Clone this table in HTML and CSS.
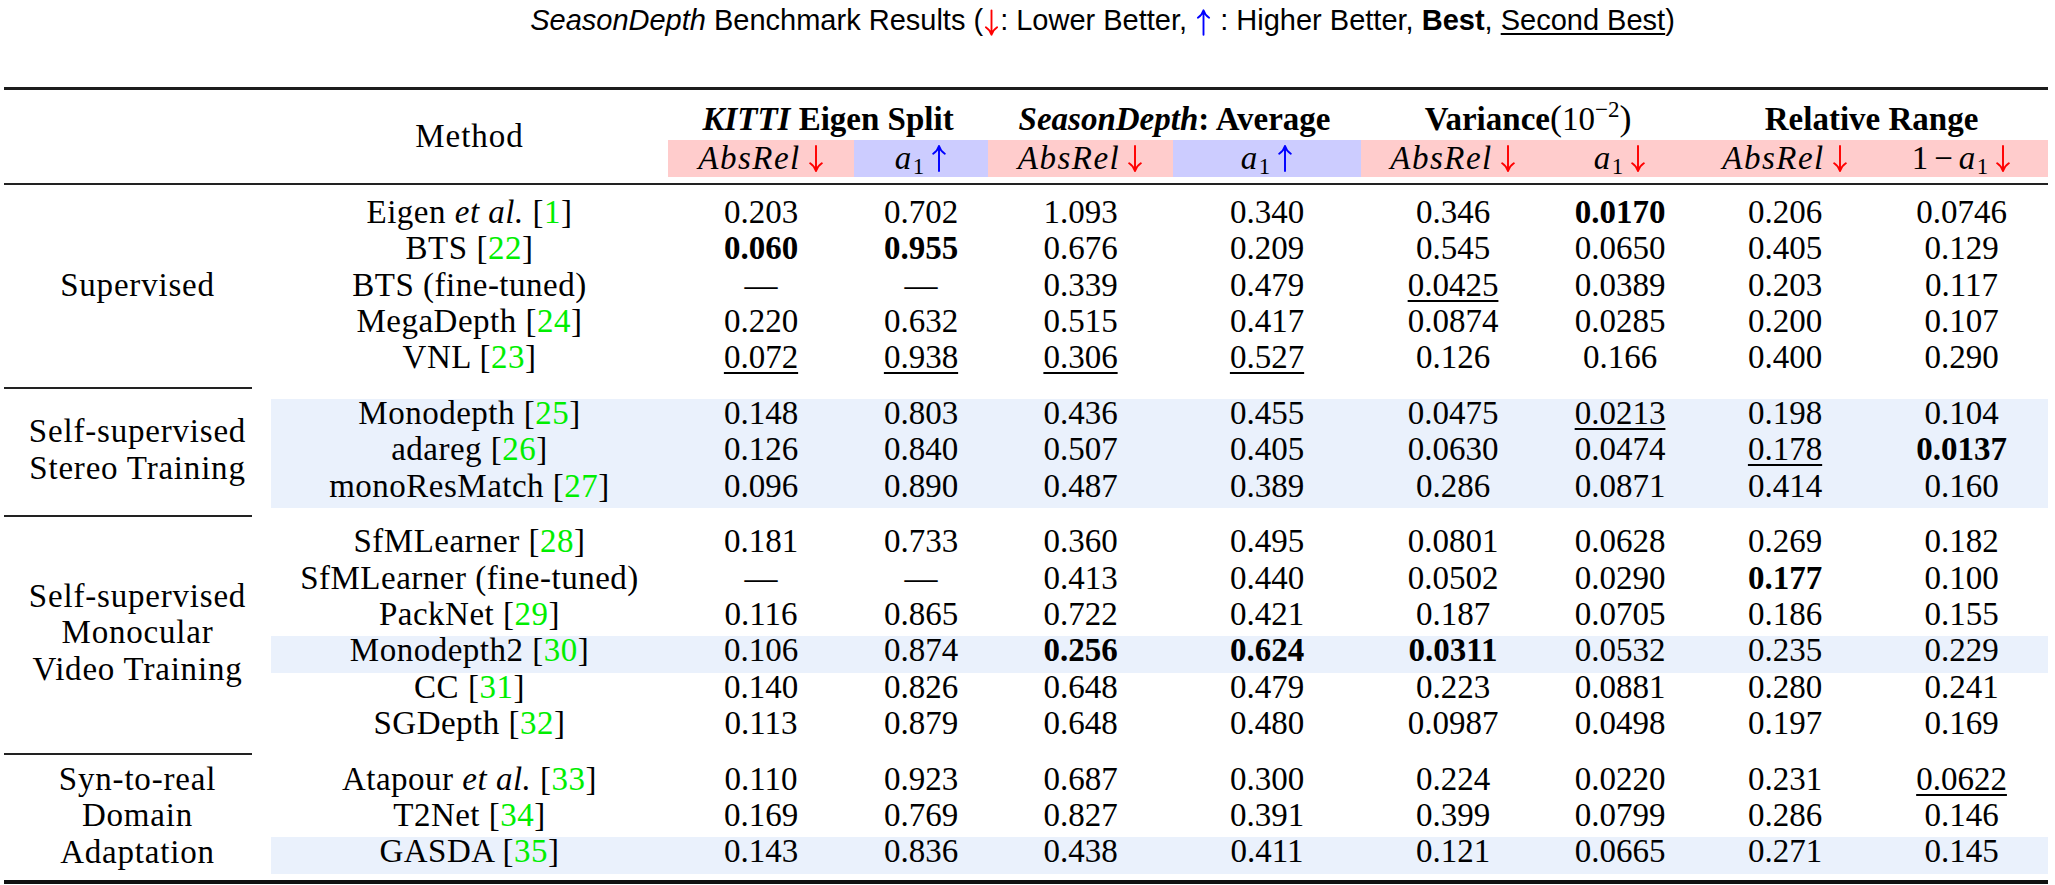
FILE: index.html
```html
<!DOCTYPE html>
<html lang="en">
<head>
<meta charset="utf-8">
<title>SeasonDepth Benchmark Results</title>
<link rel="stylesheet" href="styles.css">
</head>
<body>
<p class="title"><i>SeasonDepth</i> Benchmark Results (<svg class="tarr red" viewBox="0 0 16 28"><path d="M8 1V26M2 19C5 21 7 23.5 8 27C9 23.5 11 21 14 19"/></svg>: Lower Better, <svg class="tarr blue" viewBox="0 0 16 28"><path d="M8 27V2M2 9C5 7 7 4.5 8 1C9 4.5 11 7 14 9"/></svg> : Higher Better, <b>Best</b>, <u class="tu">Second Best</u>)</p>

<table class="bench">
  <colgroup>
    <col class="c-grp"><col class="c-meth"><col class="c-1"><col class="c-2"><col class="c-3"><col class="c-4"><col class="c-5"><col class="c-6"><col class="c-7"><col class="c-8">
  </colgroup>
  <thead>
    <tr class="h1">
      <th rowspan="2" class="blank"></th>
      <th rowspan="2" class="meth-h">Method</th>
      <th colspan="2"><i>KITTI</i> Eigen Split</th>
      <th colspan="2"><i>SeasonDepth</i>: Average</th>
      <th colspan="2">Variance<span class="rm"><span class="paren">(</span>10<span class="sup">−2</span><span class="paren">)</span></span></th>
      <th colspan="2">Relative Range</th>
    </tr>
    <tr class="h2">
      <th class="pk"><span class="m">AbsRel</span><svg class="arr red" viewBox="0 0 16 28"><path d="M8 1V26M2 19C5 21 7 23.5 8 27C9 23.5 11 21 14 19"/></svg></th>
      <th class="bl"><span class="m">a</span><span class="sub">1</span><svg class="arr blue" viewBox="0 0 16 28"><path d="M8 27V2M2 9C5 7 7 4.5 8 1C9 4.5 11 7 14 9"/></svg></th>
      <th class="pk"><span class="m">AbsRel</span><svg class="arr red" viewBox="0 0 16 28"><path d="M8 1V26M2 19C5 21 7 23.5 8 27C9 23.5 11 21 14 19"/></svg></th>
      <th class="bl"><span class="m">a</span><span class="sub">1</span><svg class="arr blue" viewBox="0 0 16 28"><path d="M8 27V2M2 9C5 7 7 4.5 8 1C9 4.5 11 7 14 9"/></svg></th>
      <th class="pk"><span class="m">AbsRel</span><svg class="arr red" viewBox="0 0 16 28"><path d="M8 1V26M2 19C5 21 7 23.5 8 27C9 23.5 11 21 14 19"/></svg></th>
      <th class="pk"><span class="m">a</span><span class="sub">1</span><svg class="arr red" viewBox="0 0 16 28"><path d="M8 1V26M2 19C5 21 7 23.5 8 27C9 23.5 11 21 14 19"/></svg></th>
      <th class="pk"><span class="m">AbsRel</span><svg class="arr red" viewBox="0 0 16 28"><path d="M8 1V26M2 19C5 21 7 23.5 8 27C9 23.5 11 21 14 19"/></svg></th>
      <th class="pk"><span class="one">1</span><span class="minus">−</span><span class="m">a</span><span class="sub">1</span><svg class="arr red" viewBox="0 0 16 28"><path d="M8 1V26M2 19C5 21 7 23.5 8 27C9 23.5 11 21 14 19"/></svg></th>
    </tr>
  </thead>
  <tbody>
    <tr class="midgap"><td colspan="10"><div class="midrule"></div></td></tr>

    <tr class="row">
      <td rowspan="5" class="grp"><div class="grp-text">Supervised</div></td>
      <td class="c meth">Eigen <i>et al.</i> [<span class="ref">1</span>]</td>
      <td class="c">0.203</td><td class="c">0.702</td><td class="c">1.093</td><td class="c">0.340</td><td class="c">0.346</td><td class="c"><b>0.0170</b></td><td class="c">0.206</td><td class="c">0.0746</td>
    </tr>
    <tr class="row">
      <td class="c meth">BTS [<span class="ref">22</span>]</td>
      <td class="c"><b>0.060</b></td><td class="c"><b>0.955</b></td><td class="c">0.676</td><td class="c">0.209</td><td class="c">0.545</td><td class="c">0.0650</td><td class="c">0.405</td><td class="c">0.129</td>
    </tr>
    <tr class="row">
      <td class="c meth">BTS (fine-tuned)</td>
      <td class="c">—</td><td class="c">—</td><td class="c">0.339</td><td class="c">0.479</td><td class="c"><span class="u">0.0425</span></td><td class="c">0.0389</td><td class="c">0.203</td><td class="c">0.117</td>
    </tr>
    <tr class="row">
      <td class="c meth">MegaDepth [<span class="ref">24</span>]</td>
      <td class="c">0.220</td><td class="c">0.632</td><td class="c">0.515</td><td class="c">0.417</td><td class="c">0.0874</td><td class="c">0.0285</td><td class="c">0.200</td><td class="c">0.107</td>
    </tr>
    <tr class="row">
      <td class="c meth">VNL [<span class="ref">23</span>]</td>
      <td class="c"><span class="u">0.072</span></td><td class="c"><span class="u">0.938</span></td><td class="c"><span class="u">0.306</span></td><td class="c"><span class="u">0.527</span></td><td class="c">0.126</td><td class="c">0.166</td><td class="c">0.400</td><td class="c">0.290</td>
    </tr>

    <tr class="sep"><td><div class="cmid"></div></td><td colspan="9"></td></tr>

    <tr class="row hl">
      <td rowspan="3" class="grp"><div class="grp-text">Self-supervised<br>Stereo Training</div></td>
      <td class="c meth">Monodepth [<span class="ref">25</span>]</td>
      <td class="c">0.148</td><td class="c">0.803</td><td class="c">0.436</td><td class="c">0.455</td><td class="c">0.0475</td><td class="c"><span class="u">0.0213</span></td><td class="c">0.198</td><td class="c">0.104</td>
    </tr>
    <tr class="row hl">
      <td class="c meth">adareg [<span class="ref">26</span>]</td>
      <td class="c">0.126</td><td class="c">0.840</td><td class="c">0.507</td><td class="c">0.405</td><td class="c">0.0630</td><td class="c">0.0474</td><td class="c"><span class="u">0.178</span></td><td class="c"><b>0.0137</b></td>
    </tr>
    <tr class="row hl">
      <td class="c meth">monoResMatch [<span class="ref">27</span>]</td>
      <td class="c">0.096</td><td class="c">0.890</td><td class="c">0.487</td><td class="c">0.389</td><td class="c">0.286</td><td class="c">0.0871</td><td class="c">0.414</td><td class="c">0.160</td>
    </tr>

    <tr class="sep"><td><div class="cmid"></div></td><td colspan="9"></td></tr>

    <tr class="row">
      <td rowspan="6" class="grp"><div class="grp-text">Self-supervised<br>Monocular<br>Video Training</div></td>
      <td class="c meth">SfMLearner [<span class="ref">28</span>]</td>
      <td class="c">0.181</td><td class="c">0.733</td><td class="c">0.360</td><td class="c">0.495</td><td class="c">0.0801</td><td class="c">0.0628</td><td class="c">0.269</td><td class="c">0.182</td>
    </tr>
    <tr class="row">
      <td class="c meth">SfMLearner (fine-tuned)</td>
      <td class="c">—</td><td class="c">—</td><td class="c">0.413</td><td class="c">0.440</td><td class="c">0.0502</td><td class="c">0.0290</td><td class="c"><b>0.177</b></td><td class="c">0.100</td>
    </tr>
    <tr class="row">
      <td class="c meth">PackNet [<span class="ref">29</span>]</td>
      <td class="c">0.116</td><td class="c">0.865</td><td class="c">0.722</td><td class="c">0.421</td><td class="c">0.187</td><td class="c">0.0705</td><td class="c">0.186</td><td class="c">0.155</td>
    </tr>
    <tr class="row hl">
      <td class="c meth">Monodepth2 [<span class="ref">30</span>]</td>
      <td class="c">0.106</td><td class="c">0.874</td><td class="c"><b>0.256</b></td><td class="c"><b>0.624</b></td><td class="c"><b>0.0311</b></td><td class="c">0.0532</td><td class="c">0.235</td><td class="c">0.229</td>
    </tr>
    <tr class="row">
      <td class="c meth">CC [<span class="ref">31</span>]</td>
      <td class="c">0.140</td><td class="c">0.826</td><td class="c">0.648</td><td class="c">0.479</td><td class="c">0.223</td><td class="c">0.0881</td><td class="c">0.280</td><td class="c">0.241</td>
    </tr>
    <tr class="row">
      <td class="c meth">SGDepth [<span class="ref">32</span>]</td>
      <td class="c">0.113</td><td class="c">0.879</td><td class="c">0.648</td><td class="c">0.480</td><td class="c">0.0987</td><td class="c">0.0498</td><td class="c">0.197</td><td class="c">0.169</td>
    </tr>

    <tr class="sep"><td><div class="cmid"></div></td><td colspan="9"></td></tr>

    <tr class="row">
      <td rowspan="3" class="grp"><div class="grp-text">Syn-to-real<br>Domain<br>Adaptation</div></td>
      <td class="c meth">Atapour <i>et al.</i> [<span class="ref">33</span>]</td>
      <td class="c">0.110</td><td class="c">0.923</td><td class="c">0.687</td><td class="c">0.300</td><td class="c">0.224</td><td class="c">0.0220</td><td class="c">0.231</td><td class="c"><span class="u">0.0622</span></td>
    </tr>
    <tr class="row">
      <td class="c meth">T2Net [<span class="ref">34</span>]</td>
      <td class="c">0.169</td><td class="c">0.769</td><td class="c">0.827</td><td class="c">0.391</td><td class="c">0.399</td><td class="c">0.0799</td><td class="c">0.286</td><td class="c">0.146</td>
    </tr>
    <tr class="row hl">
      <td class="c meth">GASDA [<span class="ref">35</span>]</td>
      <td class="c">0.143</td><td class="c">0.836</td><td class="c">0.438</td><td class="c">0.411</td><td class="c">0.121</td><td class="c">0.0665</td><td class="c">0.271</td><td class="c">0.145</td>
    </tr>

    <tr class="endgap"><td colspan="10"></td></tr>
  </tbody>
</table>
</body>
</html>
```

FILE: styles.css
```css
* { box-sizing: border-box; }

html, body {
  margin: 0;
  padding: 0;
  background: #ffffff;
}

body {
  width: 2055px;
  height: 885px;
  overflow: hidden;
  color: #000000;
}

/* ---------- title ---------- */
.title {
  margin: 0;
  height: 40px;
  line-height: 40px;
  padding-left: 150px;
  text-align: center;
  white-space: nowrap;
  font-family: "Liberation Sans", Arial, sans-serif;
  font-size: 29px;
}

.tarr {
  width: 15px;
  height: 27px;
  vertical-align: -6px;
  margin: 0 1px;
}

.tu {
  text-decoration-thickness: 1.5px;
  text-underline-offset: 3px;
}

.red { color: #ff0000; }
.blue { color: #0000ff; }

.tarr path,
.arr path {
  fill: none;
  stroke: currentColor;
  stroke-width: 2;
  stroke-linecap: round;
  stroke-linejoin: round;
}

/* ---------- table ---------- */
.bench {
  margin: 47px 0 0 4px;
  width: 2044px;
  table-layout: fixed;
  border-collapse: separate;
  border-spacing: 0;
  border-top: 3px solid #1c1c1c;
  border-bottom: 4px solid #111111;
  font-family: "Liberation Serif", "Times New Roman", serif;
  font-size: 33px;
}

.c-grp { width: 267px; }
.c-meth { width: 397px; }
.c-1 { width: 186px; }
.c-2 { width: 134px; }
.c-3 { width: 185px; }
.c-4 { width: 188px; }
.c-5 { width: 184px; }
.c-6 { width: 150px; }
.c-7 { width: 180px; }
.c-8 { width: 173px; }

.bench th,
.bench td {
  padding: 0;
  text-align: center;
  white-space: nowrap;
}

/* header row 1 */
.h1 th {
  height: 50px;
  line-height: 36px;
  padding-bottom: 3px;
  vertical-align: bottom;
  font-weight: bold;
}

.h1 .meth-h {
  font-weight: normal;
  vertical-align: middle;
  padding: 5px 0 0;
  letter-spacing: 1px;
}

.rm {
  font-weight: normal;
}

.paren {
  font-size: 36px;
}

.sup {
  font-size: 23px;
  vertical-align: 13px;
  line-height: 0;
}

/* header row 2 */
.h2 th {
  height: 37px;
  line-height: 37px;
  vertical-align: middle;
  font-weight: normal;
}

.pk { background: #ffcccc; }
.bl { background: #ccccff; }

.m {
  font-style: italic;
  letter-spacing: 1.5px;
}

.sub {
  font-size: 23px;
  vertical-align: -5px;
  line-height: 0;
}

.one { margin-right: 6px; }
.minus { margin-right: 6px; }

.arr {
  width: 16px;
  height: 27px;
  vertical-align: -3px;
  margin-left: 7px;
}

/* rules */
.midgap td {
  height: 21px;
  vertical-align: top;
}

.midrule {
  margin-top: 6px;
  height: 2px;
  background: #222222;
}

.sep td {
  height: 19.5px;
  vertical-align: top;
}

.cmid {
  margin-top: 7.5px;
  margin-right: 19px;
  height: 2px;
  background: #222222;
}

.endgap td {
  height: 6.5px;
}

/* body rows */
.row td {
  height: 36.3px;
  line-height: 29px;
  vertical-align: top;
}

.row td.meth {
  letter-spacing: 0.5px;
}

.row.hl td.c {
  background: #eaf1fc;
}

.row td.grp {
  vertical-align: middle;
  line-height: 36.3px;
  letter-spacing: 0.8px;
  background: #ffffff;
}

.grp-text {
  margin-top: -7.3px;
}

.ref { color: #00ee00; }

.u {
  text-decoration: underline;
  text-decoration-thickness: 1.5px;
  text-underline-offset: 4px;
}
```
